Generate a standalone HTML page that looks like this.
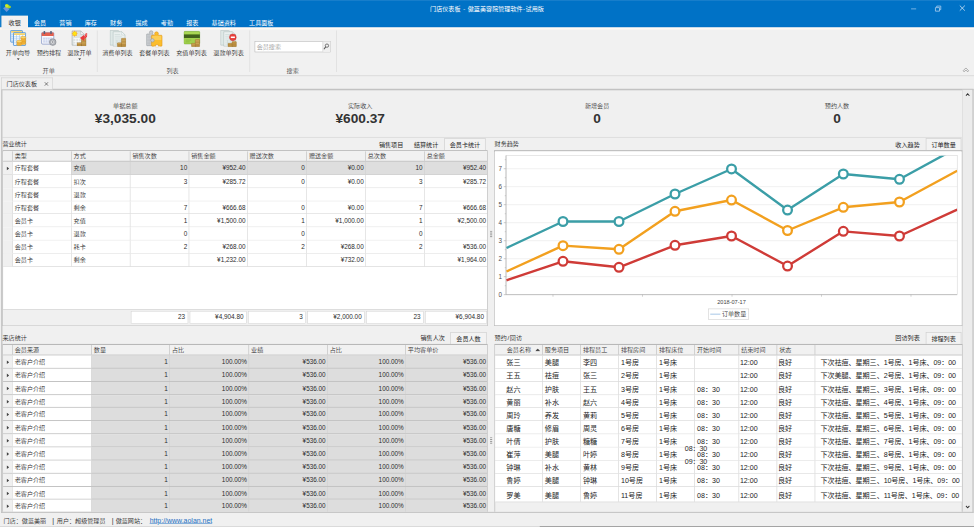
<!DOCTYPE html><html lang="zh"><head><meta charset="utf-8"><title>门店仪表板</title><style>
*{box-sizing:border-box;margin:0;padding:0}
html,body{width:974px;height:527px;overflow:hidden;background:#f0f0f0}
body{font-family:"Liberation Sans","Noto Sans CJK SC",sans-serif;font-size:12px;color:#2b2b2b;font-weight:350}
#app{position:absolute;left:0;top:0;width:1920px;height:1039px;transform:scale(0.507292);transform-origin:0 0;background:#f0f0f0;overflow:hidden}
.abs{position:absolute}
.t{position:absolute;white-space:nowrap;line-height:14px}
#blue{left:0;top:0;width:1920px;height:54px;background:#0072c6;border-bottom:1.500px solid #0066ba}
.rt{position:absolute;top:32px;height:22px;line-height:26px;overflow:hidden;color:#fff;padding:0 13px;white-space:nowrap;font-weight:400}
.rt.on{background:#f1f1f1;color:#2e2e2e;height:26px;box-shadow:0 0 0 1.200px #fcf4ea}
.sep{position:absolute;top:60px;width:1px;height:82px;background:#d4d4d4}
.lb{position:absolute;text-align:center;top:98px;line-height:14px;white-space:nowrap}
.gl{position:absolute;top:132px;line-height:14px;text-align:center;width:60px;margin-left:-30px;color:#444}
.grid{position:absolute;background:#fff;border:1.500px solid #a6a6a6;border-top:2px solid #b6b6b6;overflow:hidden}
.hd{position:absolute;left:0;top:0;height:21px;background:#f1f1f1;border-bottom:2px solid #c0c0c0}
.hc{position:absolute;top:0;height:19px;line-height:19px;padding-left:4px;border-left:1px solid #b2b2b2;color:#333;white-space:nowrap}
.row{position:absolute;left:0;height:26px;border-bottom:1px solid #c9c9c9}
.c{position:absolute;top:0;bottom:0;line-height:26px;padding:0 3px 0 4px;border-left:1px solid #cdcdcd;white-space:nowrap;overflow:hidden}
.r{text-align:right;font-size:12.600px}
.ind{position:absolute;left:0;top:0;bottom:0;width:19px;background:#f0f0f0}
.tab{position:absolute;height:23px;line-height:25px;text-align:center;white-space:nowrap;color:#262626;font-weight:400}
.tab.on{background:#f3f3f3;border:1px solid #c4c4c4;border-bottom:none}
.fbox{position:absolute;top:2.500px;height:25px;line-height:22px;font-size:12.600px;background:#fff;border:1px solid #cfcfcf;text-align:right;padding-right:5px}
.g4 .c{font-family:"Liberation Sans","Noto Sans CJK SC",sans-serif;font-size:14px;padding-left:4px;font-weight:400;color:#1c1c1c;border-left:1px solid #c9c9c9}
.g4 .row{border-bottom:1px solid #c9c9c9}
</style></head><body><div id="app">
<div class="abs" id="blue"></div>
<svg class="abs" style="left:0;top:0" width="30" height="30" viewBox="0 0 30 30"><path d="M6 16.500l6.500-4.500 6 6-5.500 5.500z" fill="#7f9bdc" opacity="0.85"/><path d="M10 9.500c2-2.500 6-1.500 8 1.500 2.500 0 4 1.500 3.500 4-1.500 2-5 2-6.500 0.500-3 0.500-6-2.500-5-6z" fill="#a6d427"/><path d="M10.500 10c1.500-2 4.500-1.500 6 0.800 0.500 2-1 4-3 4-2.500-0.300-3.800-2.500-3-4.800z" fill="#cbe832"/></svg>
<div class="abs" style="left:0;top:0;width:1920px;height:2px;background:rgba(255,255,255,0.09)"></div><div class="abs" style="left:0;top:0;width:2px;height:54px;background:rgba(255,255,255,0.08)"></div>
<div class="t" style="left:0;width:1920px;text-align:center;top:9.800px;color:#fff;word-spacing:1.800px;font-weight:400">门店仪表板 - 傲蓝美容院管理软件<span style="padding:0 1px">-</span>试用版</div>
<svg class="abs" style="left:1780px;top:0" width="140" height="32" viewBox="0 0 140 32"><g stroke-width="1.6" fill="none"><path d="M16 17.500h10" stroke="#8fc0ea"/><g stroke="#a9cdee"><path d="M64 15h8v7h-8z"/><path d="M66.500 14.500v-2.500h8v7h-2.500"/></g><path d="M112 11l10 10M122 11l-10 10" stroke="#d3e5f6"/></g></svg>
<div class="abs" style="left:0;top:54px;width:1920px;height:96px;background:#f1f1f1;border-bottom:1px solid #c6c6c6"></div>
<div class="abs" style="left:0;top:54px;width:1920px;height:1px;background:#c9dcee"></div><div class="abs" style="left:0;top:55px;width:1920px;height:2.500px;background:#fefaf4"></div>
<div class="rt on" style="left:4px;width:50px">收银</div>
<div class="rt" style="left:54px;width:50px">会员</div>
<div class="rt" style="left:104px;width:50px">营销</div>
<div class="rt" style="left:154px;width:50px">库存</div>
<div class="rt" style="left:204px;width:50px">财务</div>
<div class="rt" style="left:254px;width:50px">提成</div>
<div class="rt" style="left:304px;width:50px">考勤</div>
<div class="rt" style="left:354px;width:50px">报表</div>
<div class="rt" style="left:404px;width:74px">基础资料</div>
<div class="rt" style="left:478px;width:74px">工具面板</div>
<svg class="abs" style="left:20px;top:59px" width="32" height="32" viewBox="0 0 32 32">
<rect x="1" y="1" width="23" height="23" rx="1" fill="#e4f0fb" stroke="#3f8ad6" stroke-width="1.6"/>
<rect x="2" y="2" width="21" height="3.500" fill="#f6d36c"/>
<g stroke="#a9cdee" stroke-width="1"><path d="M2 9h21M2 13h21M2 17h21M2 21h21M7 5v18M13 5v18M19 5v18"/></g>
<rect x="6.500" y="5.500" width="24" height="25" rx="1" fill="#f7fbfe" stroke="#3f8ad6" stroke-width="1.6"/>
<rect x="7.500" y="6.500" width="22" height="3.500" fill="#f6d36c"/>
<g stroke="#9cc6ec" stroke-width="1.1"><path d="M7.500 13.500h22M7.500 17.500h22M7.500 21.500h22M7.500 25.500h22M12.500 10v20M18.500 10v20M24.500 10v20"/></g>
<g fill="#f6b83c" stroke="#dc961c" stroke-width="0.8"><ellipse cx="26" cy="26.500" rx="5.300" ry="2.300"/><ellipse cx="26" cy="23.500" rx="5.300" ry="2.300"/><ellipse cx="26" cy="20.500" rx="5.300" ry="2.300"/><ellipse cx="26" cy="17.500" rx="5.300" ry="2.300"/><ellipse cx="26" cy="15" rx="5.300" ry="2.300" fill="#fbd56c"/><ellipse cx="18" cy="28.500" rx="5.300" ry="2.300"/><ellipse cx="18" cy="25.500" rx="5.300" ry="2.300"/><ellipse cx="18" cy="22.800" rx="5.300" ry="2.300" fill="#fbd56c"/></g>
</svg>
<div class="lb" style="left:5px;width:61px">开单向导</div>
<svg class="abs" style="left:32.5px;top:115px" width="6" height="3.500"><path d="M0 0h6L3 3.500z" fill="#222"/></svg>
<svg class="abs" style="left:80px;top:59px" width="32" height="32" viewBox="0 0 32 32">
<rect x="2" y="5" width="24" height="23" rx="2" fill="#fbfbfd" stroke="#7d8fc4" stroke-width="1.4"/>
<path d="M2 7a2 2 0 0 1 2-2h20a2 2 0 0 1 2 2v5H2z" fill="#e2604f"/>
<rect x="6" y="2" width="3" height="6" rx="1" fill="#55607a"/><rect x="19" y="2" width="3" height="6" rx="1" fill="#55607a"/>
<rect x="5" y="15" width="18" height="10" fill="#c9d3ee"/>
<g stroke="#fff" stroke-width="0.8"><path d="M5 18.500h18M5 21.500h18M9.500 15v10M14 15v10M18.500 15v10"/></g>
<circle cx="24" cy="24" r="6.500" fill="#b9bcc2" stroke="#7b7e85" stroke-width="1.2"/><circle cx="24" cy="24" r="3.800" fill="#e9eaec" stroke="#8a8d93" stroke-width="0.8"/><circle cx="24" cy="24" r="1.500" fill="#6d7077"/>
</svg>
<div class="lb" style="left:66px;width:61px">预约排程</div>
<svg class="abs" style="left:140px;top:59px" width="32" height="32" viewBox="0 0 32 32">
<path d="M2 2h17l7 7v21H2z" fill="#dde2e2" stroke="#a3abad" stroke-width="1.2"/>
<path d="M19 2v7h7z" fill="#f4f6f6" stroke="#a3abad" stroke-width="0.8"/>
<g stroke="#fbfcfc" stroke-width="1.6"><path d="M5 17h16M5 22.500h16M5 28h12M9.500 17v11M15 17v11"/></g>
<g fill="#c69a46" stroke="#8f6627" stroke-width="0.7"><rect x="12" y="25.500" width="9.500" height="6"/><rect x="20.500" y="17" width="9" height="14.500"/></g>
<g stroke="#8f6627" stroke-width="0.6"><path d="M20.500 20h9M20.500 23h9M20.500 26h9M20.500 29h9M12 28.500h9.500"/></g>
<g stroke="#e9c47a" stroke-width="0.6"><path d="M21 18.500h8M21 21.500h8M21 24.500h8M21 27.500h8M12.500 27h8.500"/></g>
<polygon points="13.5,7.4 10.8,8.9 11.7,11.9 8.7,11.0 7.2,13.7 5.7,11.0 2.7,11.9 3.6,8.9 0.9,7.4 3.6,5.9 2.7,2.9 5.7,3.8 7.2,1.1 8.7,3.8 11.7,2.9 10.8,5.9" fill="#f8ab1c"/><circle cx="7.200" cy="7.400" r="3.600" fill="#ffe411"/>
<path d="M30 7c1.500 4.500-1.500 8.500-7 8.500" fill="none" stroke="#e8393b" stroke-width="4.500"/><path d="M17.500 16l8.500-6.500v12.500z" fill="#e8393b"/><path d="M30.500 8c0.800 3-1 5.500-4 6.500" fill="none" stroke="#f58a8a" stroke-width="1.200"/>
</svg>
<div class="lb" style="left:126px;width:61px">退款开单</div>
<svg class="abs" style="left:153.5px;top:115px" width="6" height="3.500"><path d="M0 0h6L3 3.500z" fill="#222"/></svg>
<div class="sep" style="left:191px"></div>
<svg class="abs" style="left:216px;top:59px" width="33" height="34" viewBox="0 0 33 34">
<path d="M1 1h16l6 6v23H1z" fill="#dfe9e7" stroke="#afc0bd" stroke-width="1.1"/>
<path d="M7 3.500h17l6.500 6.500v22H7z" fill="#eaf1f0" stroke="#afc0bd" stroke-width="1.1"/>
<path d="M24 3.500v6.500h6.500z" fill="#f7faf9" stroke="#afc0bd" stroke-width="0.8"/>
<g stroke="#c3d2cf" stroke-width="1"><path d="M10 9h11M10 12.500h14M10 16h14M10 20h17M10 24h17M10 28h8M14.500 20v8M21 20v5"/></g>
<g fill="#c69a46" stroke="#8f6627" stroke-width="0.7"><rect x="15.500" y="25.500" width="9" height="7.500" rx="1"/><rect x="23.500" y="16.500" width="8.500" height="16.500" rx="1"/></g>
<g stroke="#8f6627" stroke-width="0.6"><path d="M23.500 19.500h8.500M23.500 22.500h8.500M23.500 25.500h8.500M23.500 28.500h8.500M15.500 28.500h8M15.500 31h8M23.500 31h8.500"/></g>
<g stroke="#e6c88a" stroke-width="0.7"><path d="M24 18h7.500M24 21h7.500M24 24h7.500M24 27h7.500M16 27h7"/></g>
</svg>
<div class="lb" style="left:195px;width:73px">消费单列表</div>
<svg class="abs" style="left:288px;top:59px" width="33" height="34" viewBox="0 0 33 34">
<g fill="#c9ccd0" stroke="#8e9499" stroke-width="1"><circle cx="10" cy="5" r="3.400"/><rect x="1" y="8" width="13" height="23" rx="1"/></g><rect x="7.300" y="6.500" width="5.400" height="3" fill="#c9ccd0"/>
<g stroke="#aeb3b8" stroke-width="0.8"><path d="M2 14h11M2 20h8M2 26h11M6 9v21"/></g>
<g fill="#fbbd2d" stroke="#de921a" stroke-width="1"><circle cx="20.500" cy="7.500" r="3.800"/><rect x="10.500" y="10.500" width="21" height="21.500" rx="1.500"/></g><rect x="17.500" y="9" width="6" height="3.500" fill="#fbbd2d"/>
<path d="M12 12h18v8h-18z" fill="#fdd667" opacity="0.7"/>
<circle cx="21.500" cy="32" r="3.300" fill="#f1f1f1" stroke="#de921a" stroke-width="1"/><rect x="16" y="32.600" width="11" height="2" fill="#f1f1f1"/>
<circle cx="12.500" cy="20.500" r="3.400" fill="#c9ccd0" stroke="#8e9499" stroke-width="1"/>
</svg>
<div class="lb" style="left:268px;width:73px">套餐单列表</div>
<svg class="abs" style="left:362px;top:59px" width="33" height="34" viewBox="0 0 33 34">
<rect x="0.500" y="3" width="31.500" height="24.500" rx="2" fill="#94c93d" stroke="#5f9a22" stroke-width="1"/>
<rect x="1" y="3.500" width="30.500" height="4.500" rx="1.500" fill="#a9d655"/>
<rect x="0.500" y="9" width="31.500" height="7" fill="#42601d"/>
<rect x="1" y="16" width="30.500" height="11" fill="#a2d04f"/>
<g stroke="#7fb435" stroke-width="1.2"><path d="M4 20h11M4 23.500h8"/></g>
<g fill="#c69a46" stroke="#8f6627" stroke-width="0.7"><rect x="15.500" y="26.500" width="8.500" height="6.500" rx="1"/><rect x="23" y="19" width="8.500" height="14" rx="1"/></g>
<g stroke="#8f6627" stroke-width="0.6"><path d="M23 22h8.500M23 25h8.500M23 28h8.500M23 31h8.500M15.500 29.500h7.500"/></g>
<g stroke="#e6c88a" stroke-width="0.7"><path d="M23.500 20.500h7.500M23.500 23.500h7.500M23.500 26.500h7.500M16 28h7"/></g>
</svg>
<div class="lb" style="left:341px;width:73px">充值单列表</div>
<svg class="abs" style="left:434px;top:59px" width="33" height="34" viewBox="0 0 33 34">
<path d="M1 1h16l6 6v23H1z" fill="#dfe9e7" stroke="#afc0bd" stroke-width="1.1"/>
<path d="M7 3.500h17l6.500 6.500v22H7z" fill="#eaf1f0" stroke="#afc0bd" stroke-width="1.1"/>
<path d="M24 3.500v6.500h6.500z" fill="#f7faf9" stroke="#afc0bd" stroke-width="0.8"/>
<g stroke="#c3d2cf" stroke-width="1"><path d="M10 9h11M10 12.500h14M10 16h14M10 20h17M10 24h17M10 28h8M14.500 20v8M21 20v5"/></g>
<g fill="#c69a46" stroke="#8f6627" stroke-width="0.7"><rect x="15.500" y="26.500" width="9" height="6.500" rx="1"/><rect x="23.500" y="23" width="8.500" height="10" rx="1"/></g>
<g stroke="#8f6627" stroke-width="0.6"><path d="M23.500 26h8.500M23.500 29h8.500M15.500 29.500h8M23.500 31.500h8.500"/></g>
<circle cx="25" cy="14.500" r="6.700" fill="#ea403c" stroke="#b92b29" stroke-width="0.8"/><rect x="21" y="13" width="8" height="3" fill="#fff"/>
</svg>
<div class="lb" style="left:414px;width:73px">退款单列表</div>
<div class="sep" style="left:492px"></div>
<div class="abs" style="left:502px;top:81px;width:150px;height:22px;background:#fff;border:1px solid #ababab"></div>
<div class="t" style="left:506px;top:85px;color:#999">会员搜索</div>
<div class="abs" style="left:636px;top:82px;width:15px;height:20px;background:#f0f0f0;border-left:1px solid #c8c8c8"></div>
<svg class="abs" style="left:637px;top:85px" width="13" height="14" viewBox="0 0 13 14"><circle cx="7.500" cy="5" r="3.300" fill="none" stroke="#555" stroke-width="1.5"/><path d="M5 7.500L1.500 12" stroke="#555" stroke-width="2"/></svg>
<div class="sep" style="left:663px"></div>
<div class="gl" style="left:96px">开单</div><div class="gl" style="left:340px">列表</div><div class="gl" style="left:577px">搜索</div>
<svg class="abs" style="left:1897px;top:132px" width="14" height="12" viewBox="0 0 14 12"><path d="M1.500 7.500L7 2l5.500 5.500L10.500 9.500 7 6 3.500 9.500z" fill="none" stroke="#777" stroke-width="1.1"/></svg>
<div class="abs" style="left:2px;top:174.500px;width:1917px;height:837px;border:2.500px solid #c6c6c6;border-left:3px solid #c8c8c8;border-top:3px solid #c2c2c2;border-bottom:none;background:#f0f0f0"></div>
<div class="abs" style="left:2px;top:153px;width:102px;height:23px;border:1px solid #c9c9c9;border-bottom:none;background:#f0f0f0"></div>
<div class="t" style="left:13px;top:158px;color:#222">门店仪表板</div>
<svg class="abs" style="left:87px;top:161px" width="9" height="9"><path d="M1 1l7 7M8 1l-7 7" stroke="#444" stroke-width="1.3"/></svg>
<div class="t" style="left:97px;width:300px;text-align:center;top:201px;color:#3a3a3a">单据总额</div>
<div class="t" style="left:97px;width:300px;text-align:center;top:217px;line-height:32px;font-size:27px;font-weight:bold;color:#333">¥3,035.00</div>
<div class="t" style="left:560px;width:300px;text-align:center;top:201px;color:#3a3a3a">实际收入</div>
<div class="t" style="left:560px;width:300px;text-align:center;top:217px;line-height:32px;font-size:27px;font-weight:bold;color:#333">¥600.37</div>
<div class="t" style="left:1027px;width:300px;text-align:center;top:201px;color:#3a3a3a">新增会员</div>
<div class="t" style="left:1027px;width:300px;text-align:center;top:217px;line-height:32px;font-size:27px;font-weight:bold;color:#333">0</div>
<div class="t" style="left:1500px;width:300px;text-align:center;top:201px;color:#3a3a3a">预约人数</div>
<div class="t" style="left:1500px;width:300px;text-align:center;top:217px;line-height:32px;font-size:27px;font-weight:bold;color:#333">0</div>
<div class="abs" style="left:4px;top:270px;width:1892px;height:1px;background:#cdcdcd"></div>
<div class="abs" style="left:1897px;top:177px;width:20px;height:834px;background:#ececec;border-left:1px solid #d4d4d4"></div>
<svg class="abs" style="left:1903px;top:183px" width="9" height="7"><path d="M1 5.800L4.500 2 8 5.800" fill="none" stroke="#333" stroke-width="2"/></svg>
<svg class="abs" style="left:1903px;top:996px" width="9" height="7"><path d="M1 1.200L4.500 5 8 1.200" fill="none" stroke="#333" stroke-width="2"/></svg>
<div class="abs" style="left:1917px;top:176px;width:2px;height:836px;background:#c6c6c6"></div>
<div class="t" style="left:5px;top:276.500px">营业统计</div>
<div class="tab" style="left:736.5px;top:273px;width:69px">销售项目</div>
<div class="tab" style="left:805.5px;top:273px;width:69px">结算统计</div>
<div class="tab on" style="left:876.0px;top:273px;width:81px">会员卡统计</div>
<div class="grid" style="left:5px;top:296px;width:956px;height:346px">
<div class="hd" style="width:956px"></div>
<div class="hc" style="left:18px;width:116px">类型</div>
<div class="hc" style="left:134px;width:116px">方式</div>
<div class="hc" style="left:250px;width:116px">销售次数</div>
<div class="hc" style="left:366px;width:115px">销售金额</div>
<div class="hc" style="left:481px;width:117px">赠送次数</div>
<div class="hc" style="left:598px;width:116px">赠送金额</div>
<div class="hc" style="left:714px;width:116px">总次数</div>
<div class="hc" style="left:830px;width:125px">总金额</div>
<div class="row" style="top:21px;height:26px;width:956px;background:#dedede">
<div class="ind"></div>
<svg class="abs" style="left:7px;top:9px" width="5" height="8"><path d="M0 0l5 4-5 4z" fill="#444"/></svg>
<div class="c" style="left:18px;width:116px;background:#fff">疗程套餐</div>
<div class="c" style="left:134px;width:116px">充值</div>
<div class="c r" style="left:250px;width:116px">10</div>
<div class="c r" style="left:366px;width:115px">¥952.40</div>
<div class="c r" style="left:481px;width:117px">0</div>
<div class="c r" style="left:598px;width:116px">¥0.00</div>
<div class="c r" style="left:714px;width:116px">10</div>
<div class="c r" style="left:830px;width:125px">¥952.40</div>
</div>
<div class="row" style="top:47px;height:26px;width:956px;background:#fff">
<div class="ind"></div>
<div class="c" style="left:18px;width:116px">疗程套餐</div>
<div class="c" style="left:134px;width:116px">扣次</div>
<div class="c r" style="left:250px;width:116px">3</div>
<div class="c r" style="left:366px;width:115px">¥285.72</div>
<div class="c r" style="left:481px;width:117px">0</div>
<div class="c r" style="left:598px;width:116px">¥0.00</div>
<div class="c r" style="left:714px;width:116px">3</div>
<div class="c r" style="left:830px;width:125px">¥285.72</div>
</div>
<div class="row" style="top:73px;height:26px;width:956px;background:#fff">
<div class="ind"></div>
<div class="c" style="left:18px;width:116px">疗程套餐</div>
<div class="c" style="left:134px;width:116px">退款</div>
<div class="c r" style="left:250px;width:116px"></div>
<div class="c r" style="left:366px;width:115px"></div>
<div class="c r" style="left:481px;width:117px"></div>
<div class="c r" style="left:598px;width:116px"></div>
<div class="c r" style="left:714px;width:116px"></div>
<div class="c r" style="left:830px;width:125px"></div>
</div>
<div class="row" style="top:99px;height:25px;width:956px;background:#fff">
<div class="ind"></div>
<div class="c" style="left:18px;width:116px">疗程套餐</div>
<div class="c" style="left:134px;width:116px">剩余</div>
<div class="c r" style="left:250px;width:116px">7</div>
<div class="c r" style="left:366px;width:115px">¥666.68</div>
<div class="c r" style="left:481px;width:117px">0</div>
<div class="c r" style="left:598px;width:116px">¥0.00</div>
<div class="c r" style="left:714px;width:116px">7</div>
<div class="c r" style="left:830px;width:125px">¥666.68</div>
</div>
<div class="row" style="top:124px;height:26px;width:956px;background:#fff">
<div class="ind"></div>
<div class="c" style="left:18px;width:116px">会员卡</div>
<div class="c" style="left:134px;width:116px">充值</div>
<div class="c r" style="left:250px;width:116px">1</div>
<div class="c r" style="left:366px;width:115px">¥1,500.00</div>
<div class="c r" style="left:481px;width:117px">1</div>
<div class="c r" style="left:598px;width:116px">¥1,000.00</div>
<div class="c r" style="left:714px;width:116px">1</div>
<div class="c r" style="left:830px;width:125px">¥2,500.00</div>
</div>
<div class="row" style="top:150px;height:26px;width:956px;background:#fff">
<div class="ind"></div>
<div class="c" style="left:18px;width:116px">会员卡</div>
<div class="c" style="left:134px;width:116px">退款</div>
<div class="c r" style="left:250px;width:116px">0</div>
<div class="c r" style="left:366px;width:115px"></div>
<div class="c r" style="left:481px;width:117px">0</div>
<div class="c r" style="left:598px;width:116px"></div>
<div class="c r" style="left:714px;width:116px">0</div>
<div class="c r" style="left:830px;width:125px"></div>
</div>
<div class="row" style="top:176px;height:26px;width:956px;background:#fff">
<div class="ind"></div>
<div class="c" style="left:18px;width:116px">会员卡</div>
<div class="c" style="left:134px;width:116px">耗卡</div>
<div class="c r" style="left:250px;width:116px">2</div>
<div class="c r" style="left:366px;width:115px">¥268.00</div>
<div class="c r" style="left:481px;width:117px">2</div>
<div class="c r" style="left:598px;width:116px">¥268.00</div>
<div class="c r" style="left:714px;width:116px">2</div>
<div class="c r" style="left:830px;width:125px">¥536.00</div>
</div>
<div class="row" style="top:202px;height:26px;width:956px;background:#fff">
<div class="ind"></div>
<div class="c" style="left:18px;width:116px">会员卡</div>
<div class="c" style="left:134px;width:116px">剩余</div>
<div class="c r" style="left:250px;width:116px"></div>
<div class="c r" style="left:366px;width:115px">¥1,232.00</div>
<div class="c r" style="left:481px;width:117px"></div>
<div class="c r" style="left:598px;width:116px">¥732.00</div>
<div class="c r" style="left:714px;width:116px"></div>
<div class="c r" style="left:830px;width:125px">¥1,964.00</div>
</div>
<div class="abs" style="left:0;top:311.500px;width:956px;height:34px;background:#f0f0f0;border-top:1px solid #c4c4c4">
<div class="fbox" style="left:252px;width:113px">23</div>
<div class="fbox" style="left:368px;width:112px">¥4,904.80</div>
<div class="fbox" style="left:483px;width:114px">3</div>
<div class="fbox" style="left:600px;width:113px">¥2,000.00</div>
<div class="fbox" style="left:716px;width:113px">23</div>
<div class="fbox" style="left:832px;width:122px">¥6,904.80</div>
</div>
</div>
<svg class="abs" style="left:966px;top:455px" width="5" height="14"><g fill="#858585"><rect x="0" y="0" width="4.500" height="1.600"/><rect x="0" y="3.600" width="4.500" height="1.600"/><rect x="0" y="7.200" width="4.500" height="1.600"/><rect x="0" y="10.800" width="4.500" height="1.600"/></g></svg>
<svg class="abs" style="left:966px;top:862px" width="5" height="14"><g fill="#858585"><rect x="0" y="0" width="4.500" height="1.600"/><rect x="0" y="3.600" width="4.500" height="1.600"/><rect x="0" y="7.200" width="4.500" height="1.600"/><rect x="0" y="10.800" width="4.500" height="1.600"/></g></svg>
<div class="t" style="left:975px;top:276.500px">财务趋势</div>
<div class="tab" style="left:1754.5px;top:273px;width:69px">收入趋势</div>
<div class="tab on" style="left:1825.0px;top:273px;width:70px">订单数量</div>
<div class="abs" style="left:974px;top:296px;width:923px;height:346px;background:#fff;border:1.500px solid #a6a6a6;border-top:2px solid #b6b6b6"></div>
<svg class="abs" style="left:0;top:0" width="1920" height="1039" viewBox="0 0 1920 1039"><defs><clipPath id="cp"><rect x="997.5" y="306.9" width="889.4" height="274.0"/></clipPath></defs><path d="M997.5 580.9h-4.500" stroke="#9a9a9a" stroke-width="1"/><text x="989.5" y="585.1" font-size="12.400" fill="#505050" text-anchor="end" font-family="Liberation Sans, sans-serif">0</text><path d="M997.5 563.2h-2.500" stroke="#a8a8a8" stroke-width="1"/><path d="M997.5 545.4H1886.9" stroke="#e4e4e4" stroke-width="1"/><path d="M997.5 545.4h-4.500" stroke="#9a9a9a" stroke-width="1"/><text x="989.5" y="549.6" font-size="12.400" fill="#505050" text-anchor="end" font-family="Liberation Sans, sans-serif">1</text><path d="M997.5 527.7h-2.500" stroke="#a8a8a8" stroke-width="1"/><path d="M997.5 510.0H1886.9" stroke="#e4e4e4" stroke-width="1"/><path d="M997.5 510.0h-4.500" stroke="#9a9a9a" stroke-width="1"/><text x="989.5" y="514.2" font-size="12.400" fill="#505050" text-anchor="end" font-family="Liberation Sans, sans-serif">2</text><path d="M997.5 492.2h-2.500" stroke="#a8a8a8" stroke-width="1"/><path d="M997.5 474.5H1886.9" stroke="#e4e4e4" stroke-width="1"/><path d="M997.5 474.5h-4.500" stroke="#9a9a9a" stroke-width="1"/><text x="989.5" y="478.7" font-size="12.400" fill="#505050" text-anchor="end" font-family="Liberation Sans, sans-serif">3</text><path d="M997.5 456.7h-2.500" stroke="#a8a8a8" stroke-width="1"/><path d="M997.5 439.0H1886.9" stroke="#e4e4e4" stroke-width="1"/><path d="M997.5 439.0h-4.500" stroke="#9a9a9a" stroke-width="1"/><text x="989.5" y="443.2" font-size="12.400" fill="#505050" text-anchor="end" font-family="Liberation Sans, sans-serif">4</text><path d="M997.5 421.3h-2.500" stroke="#a8a8a8" stroke-width="1"/><path d="M997.5 403.5H1886.9" stroke="#e4e4e4" stroke-width="1"/><path d="M997.5 403.5h-4.500" stroke="#9a9a9a" stroke-width="1"/><text x="989.5" y="407.7" font-size="12.400" fill="#505050" text-anchor="end" font-family="Liberation Sans, sans-serif">5</text><path d="M997.5 385.8h-2.500" stroke="#a8a8a8" stroke-width="1"/><path d="M997.5 368.0H1886.9" stroke="#e4e4e4" stroke-width="1"/><path d="M997.5 368.0h-4.500" stroke="#9a9a9a" stroke-width="1"/><text x="989.5" y="372.2" font-size="12.400" fill="#505050" text-anchor="end" font-family="Liberation Sans, sans-serif">6</text><path d="M997.5 350.3h-2.500" stroke="#a8a8a8" stroke-width="1"/><path d="M997.5 332.6H1886.9" stroke="#e4e4e4" stroke-width="1"/><path d="M997.5 332.6h-4.500" stroke="#9a9a9a" stroke-width="1"/><text x="989.5" y="336.8" font-size="12.400" fill="#505050" text-anchor="end" font-family="Liberation Sans, sans-serif">7</text><path d="M997.5 314.8h-2.500" stroke="#a8a8a8" stroke-width="1"/><rect x="997.5" y="306.9" width="889.4" height="274.0" fill="none" stroke="#d0d0d0" stroke-width="1"/><path d="M997.5 306.9V580.9H1886.9" fill="none" stroke="#9a9a9a" stroke-width="1"/><path d="M1090.1 580.9v4" stroke="#a5a5a5" stroke-width="1"/><path d="M1266.5 580.9v4" stroke="#a5a5a5" stroke-width="1"/><path d="M1443.0 580.9v4" stroke="#a5a5a5" stroke-width="1"/><path d="M1619.4 580.9v4" stroke="#a5a5a5" stroke-width="1"/><path d="M1795.8 580.9v4" stroke="#a5a5a5" stroke-width="1"/><text x="1442.0" y="600.2" font-size="11" fill="#444" text-anchor="middle" font-family="Liberation Sans, sans-serif">2018-07-17</text><g clip-path="url(#cp)"><path d="M998.4 488.9 L1109.8 436.6 L1220.2 436.6 L1330.6 382.4 L1442.0 333.1 L1552.4 414.0 L1662.4 343.0 L1773.1 353.4 L1886.9 291.2" fill="none" stroke="#3b9ea7" stroke-width="4.700" stroke-linejoin="round"/><path d="M998.4 535.2 L1109.8 484.3 L1220.2 491.4 L1330.6 416.5 L1442.0 394.3 L1552.4 454.4 L1662.4 408.6 L1773.1 398.2 L1886.9 336.5" fill="none" stroke="#f2a01f" stroke-width="4.700" stroke-linejoin="round"/><path d="M998.4 552.5 L1109.8 515.1 L1220.2 526.9 L1330.6 483.5 L1442.0 465.2 L1552.4 524.4 L1662.4 456.0 L1773.1 465.2 L1886.9 413.2" fill="none" stroke="#cf3b37" stroke-width="4.700" stroke-linejoin="round"/><circle cx="1109.8" cy="436.6" r="8.600" fill="#fff" stroke="#3b9ea7" stroke-width="4.500"/><circle cx="1220.2" cy="436.6" r="8.600" fill="#fff" stroke="#3b9ea7" stroke-width="4.500"/><circle cx="1330.6" cy="382.4" r="8.600" fill="#fff" stroke="#3b9ea7" stroke-width="4.500"/><circle cx="1442.0" cy="333.1" r="8.600" fill="#fff" stroke="#3b9ea7" stroke-width="4.500"/><circle cx="1552.4" cy="414.0" r="8.600" fill="#fff" stroke="#3b9ea7" stroke-width="4.500"/><circle cx="1662.4" cy="343.0" r="8.600" fill="#fff" stroke="#3b9ea7" stroke-width="4.500"/><circle cx="1773.1" cy="353.4" r="8.600" fill="#fff" stroke="#3b9ea7" stroke-width="4.500"/><circle cx="1109.8" cy="484.3" r="8.600" fill="#fff" stroke="#f2a01f" stroke-width="4.500"/><circle cx="1220.2" cy="491.4" r="8.600" fill="#fff" stroke="#f2a01f" stroke-width="4.500"/><circle cx="1330.6" cy="416.5" r="8.600" fill="#fff" stroke="#f2a01f" stroke-width="4.500"/><circle cx="1442.0" cy="394.3" r="8.600" fill="#fff" stroke="#f2a01f" stroke-width="4.500"/><circle cx="1552.4" cy="454.4" r="8.600" fill="#fff" stroke="#f2a01f" stroke-width="4.500"/><circle cx="1662.4" cy="408.6" r="8.600" fill="#fff" stroke="#f2a01f" stroke-width="4.500"/><circle cx="1773.1" cy="398.2" r="8.600" fill="#fff" stroke="#f2a01f" stroke-width="4.500"/><circle cx="1109.8" cy="515.1" r="8.600" fill="#fff" stroke="#cf3b37" stroke-width="4.500"/><circle cx="1220.2" cy="526.9" r="8.600" fill="#fff" stroke="#cf3b37" stroke-width="4.500"/><circle cx="1330.6" cy="483.5" r="8.600" fill="#fff" stroke="#cf3b37" stroke-width="4.500"/><circle cx="1442.0" cy="465.2" r="8.600" fill="#fff" stroke="#cf3b37" stroke-width="4.500"/><circle cx="1552.4" cy="524.4" r="8.600" fill="#fff" stroke="#cf3b37" stroke-width="4.500"/><circle cx="1662.4" cy="456.0" r="8.600" fill="#fff" stroke="#cf3b37" stroke-width="4.500"/><circle cx="1773.1" cy="465.2" r="8.600" fill="#fff" stroke="#cf3b37" stroke-width="4.500"/></g><rect x="1396.6" y="608.9" width="79.4" height="20.7" fill="#fff" stroke="#c8c8c8" stroke-width="1"/><path d="M1400.1 619.3h20" stroke="#9fc3e6" stroke-width="1.800"/><text x="1423.1" y="623.8" font-size="12" fill="#333" font-family="Liberation Sans, Noto Sans CJK SC, sans-serif">订单数量</text></svg>
<div class="t" style="left:5px;top:659.500px">来店统计</div>
<div class="tab" style="left:818.5px;top:655px;width:69px">销售人次</div>
<div class="tab on" style="left:888.0px;top:655px;width:71px">会员人数</div>
<div class="grid" style="left:5px;top:678px;width:956px;height:331px;border-bottom:none">
<div class="hd" style="width:956px"></div>
<div class="hc" style="left:18px;width:156px">会员来源</div>
<div class="hc" style="left:174px;width:154px">数量</div>
<div class="hc" style="left:328px;width:156px">占比</div>
<div class="hc" style="left:484px;width:155px">业绩</div>
<div class="hc" style="left:639px;width:154px">占比</div>
<div class="hc" style="left:793px;width:162px">平均客单价</div>
<div class="row" style="top:21px;height:26px;width:956px;background:#dddddd;border-bottom:2px solid #c3c3c3">
<div class="ind"></div>
<svg class="abs" style="left:7px;top:9px" width="5" height="8"><path d="M0 0l5 4-5 4z" fill="#444"/></svg>
<div class="c" style="left:18px;width:156px;border-left-color:#cfcfcf;background:#fff">老客户介绍</div>
<div class="c r" style="left:174px;width:154px;border-left-color:#cfcfcf">1</div>
<div class="c r" style="left:328px;width:156px;border-left-color:#cfcfcf">100.00%</div>
<div class="c r" style="left:484px;width:155px;border-left-color:#cfcfcf">¥536.00</div>
<div class="c r" style="left:639px;width:154px;border-left-color:#cfcfcf">100.00%</div>
<div class="c r" style="left:793px;width:162px;border-left-color:#cfcfcf">¥536.00</div>
</div>
<div class="row" style="top:47px;height:26px;width:956px;background:#dddddd;border-bottom:2px solid #c3c3c3">
<div class="ind"></div>
<svg class="abs" style="left:7px;top:9px" width="5" height="8"><path d="M0 0l5 4-5 4z" fill="#444"/></svg>
<div class="c" style="left:18px;width:156px;border-left-color:#cfcfcf;background:#fff">老客户介绍</div>
<div class="c r" style="left:174px;width:154px;border-left-color:#cfcfcf">1</div>
<div class="c r" style="left:328px;width:156px;border-left-color:#cfcfcf">100.00%</div>
<div class="c r" style="left:484px;width:155px;border-left-color:#cfcfcf">¥536.00</div>
<div class="c r" style="left:639px;width:154px;border-left-color:#cfcfcf">100.00%</div>
<div class="c r" style="left:793px;width:162px;border-left-color:#cfcfcf">¥536.00</div>
</div>
<div class="row" style="top:73px;height:26px;width:956px;background:#dddddd;border-bottom:2px solid #c3c3c3">
<div class="ind"></div>
<svg class="abs" style="left:7px;top:9px" width="5" height="8"><path d="M0 0l5 4-5 4z" fill="#444"/></svg>
<div class="c" style="left:18px;width:156px;border-left-color:#cfcfcf;background:#fff">老客户介绍</div>
<div class="c r" style="left:174px;width:154px;border-left-color:#cfcfcf">1</div>
<div class="c r" style="left:328px;width:156px;border-left-color:#cfcfcf">100.00%</div>
<div class="c r" style="left:484px;width:155px;border-left-color:#cfcfcf">¥536.00</div>
<div class="c r" style="left:639px;width:154px;border-left-color:#cfcfcf">100.00%</div>
<div class="c r" style="left:793px;width:162px;border-left-color:#cfcfcf">¥536.00</div>
</div>
<div class="row" style="top:99px;height:25px;width:956px;background:#dddddd;border-bottom:2px solid #c3c3c3">
<div class="ind"></div>
<svg class="abs" style="left:7px;top:9px" width="5" height="8"><path d="M0 0l5 4-5 4z" fill="#444"/></svg>
<div class="c" style="left:18px;width:156px;border-left-color:#cfcfcf;background:#fff">老客户介绍</div>
<div class="c r" style="left:174px;width:154px;border-left-color:#cfcfcf">1</div>
<div class="c r" style="left:328px;width:156px;border-left-color:#cfcfcf">100.00%</div>
<div class="c r" style="left:484px;width:155px;border-left-color:#cfcfcf">¥536.00</div>
<div class="c r" style="left:639px;width:154px;border-left-color:#cfcfcf">100.00%</div>
<div class="c r" style="left:793px;width:162px;border-left-color:#cfcfcf">¥536.00</div>
</div>
<div class="row" style="top:124px;height:26px;width:956px;background:#dddddd;border-bottom:2px solid #c3c3c3">
<div class="ind"></div>
<svg class="abs" style="left:7px;top:9px" width="5" height="8"><path d="M0 0l5 4-5 4z" fill="#444"/></svg>
<div class="c" style="left:18px;width:156px;border-left-color:#cfcfcf;background:#fff">老客户介绍</div>
<div class="c r" style="left:174px;width:154px;border-left-color:#cfcfcf">1</div>
<div class="c r" style="left:328px;width:156px;border-left-color:#cfcfcf">100.00%</div>
<div class="c r" style="left:484px;width:155px;border-left-color:#cfcfcf">¥536.00</div>
<div class="c r" style="left:639px;width:154px;border-left-color:#cfcfcf">100.00%</div>
<div class="c r" style="left:793px;width:162px;border-left-color:#cfcfcf">¥536.00</div>
</div>
<div class="row" style="top:150px;height:26px;width:956px;background:#dddddd;border-bottom:2px solid #c3c3c3">
<div class="ind"></div>
<svg class="abs" style="left:7px;top:9px" width="5" height="8"><path d="M0 0l5 4-5 4z" fill="#444"/></svg>
<div class="c" style="left:18px;width:156px;border-left-color:#cfcfcf;background:#fff">老客户介绍</div>
<div class="c r" style="left:174px;width:154px;border-left-color:#cfcfcf">1</div>
<div class="c r" style="left:328px;width:156px;border-left-color:#cfcfcf">100.00%</div>
<div class="c r" style="left:484px;width:155px;border-left-color:#cfcfcf">¥536.00</div>
<div class="c r" style="left:639px;width:154px;border-left-color:#cfcfcf">100.00%</div>
<div class="c r" style="left:793px;width:162px;border-left-color:#cfcfcf">¥536.00</div>
</div>
<div class="row" style="top:176px;height:26px;width:956px;background:#dddddd;border-bottom:2px solid #c3c3c3">
<div class="ind"></div>
<svg class="abs" style="left:7px;top:9px" width="5" height="8"><path d="M0 0l5 4-5 4z" fill="#444"/></svg>
<div class="c" style="left:18px;width:156px;border-left-color:#cfcfcf;background:#fff">老客户介绍</div>
<div class="c r" style="left:174px;width:154px;border-left-color:#cfcfcf">1</div>
<div class="c r" style="left:328px;width:156px;border-left-color:#cfcfcf">100.00%</div>
<div class="c r" style="left:484px;width:155px;border-left-color:#cfcfcf">¥536.00</div>
<div class="c r" style="left:639px;width:154px;border-left-color:#cfcfcf">100.00%</div>
<div class="c r" style="left:793px;width:162px;border-left-color:#cfcfcf">¥536.00</div>
</div>
<div class="row" style="top:202px;height:26px;width:956px;background:#dddddd;border-bottom:2px solid #c3c3c3">
<div class="ind"></div>
<svg class="abs" style="left:7px;top:9px" width="5" height="8"><path d="M0 0l5 4-5 4z" fill="#444"/></svg>
<div class="c" style="left:18px;width:156px;border-left-color:#cfcfcf;background:#fff">老客户介绍</div>
<div class="c r" style="left:174px;width:154px;border-left-color:#cfcfcf">1</div>
<div class="c r" style="left:328px;width:156px;border-left-color:#cfcfcf">100.00%</div>
<div class="c r" style="left:484px;width:155px;border-left-color:#cfcfcf">¥536.00</div>
<div class="c r" style="left:639px;width:154px;border-left-color:#cfcfcf">100.00%</div>
<div class="c r" style="left:793px;width:162px;border-left-color:#cfcfcf">¥536.00</div>
</div>
<div class="row" style="top:228px;height:26px;width:956px;background:#dddddd;border-bottom:2px solid #c3c3c3">
<div class="ind"></div>
<svg class="abs" style="left:7px;top:9px" width="5" height="8"><path d="M0 0l5 4-5 4z" fill="#444"/></svg>
<div class="c" style="left:18px;width:156px;border-left-color:#cfcfcf;background:#fff">老客户介绍</div>
<div class="c r" style="left:174px;width:154px;border-left-color:#cfcfcf">1</div>
<div class="c r" style="left:328px;width:156px;border-left-color:#cfcfcf">100.00%</div>
<div class="c r" style="left:484px;width:155px;border-left-color:#cfcfcf">¥536.00</div>
<div class="c r" style="left:639px;width:154px;border-left-color:#cfcfcf">100.00%</div>
<div class="c r" style="left:793px;width:162px;border-left-color:#cfcfcf">¥536.00</div>
</div>
<div class="row" style="top:254px;height:26px;width:956px;background:#dddddd;border-bottom:2px solid #c3c3c3">
<div class="ind"></div>
<svg class="abs" style="left:7px;top:9px" width="5" height="8"><path d="M0 0l5 4-5 4z" fill="#444"/></svg>
<div class="c" style="left:18px;width:156px;border-left-color:#cfcfcf;background:#fff">老客户介绍</div>
<div class="c r" style="left:174px;width:154px;border-left-color:#cfcfcf">1</div>
<div class="c r" style="left:328px;width:156px;border-left-color:#cfcfcf">100.00%</div>
<div class="c r" style="left:484px;width:155px;border-left-color:#cfcfcf">¥536.00</div>
<div class="c r" style="left:639px;width:154px;border-left-color:#cfcfcf">100.00%</div>
<div class="c r" style="left:793px;width:162px;border-left-color:#cfcfcf">¥536.00</div>
</div>
<div class="row" style="top:280px;height:25px;width:956px;background:#dddddd;border-bottom:2px solid #c3c3c3">
<div class="ind"></div>
<svg class="abs" style="left:7px;top:9px" width="5" height="8"><path d="M0 0l5 4-5 4z" fill="#444"/></svg>
<div class="c" style="left:18px;width:156px;border-left-color:#cfcfcf;background:#fff">老客户介绍</div>
<div class="c r" style="left:174px;width:154px;border-left-color:#cfcfcf">1</div>
<div class="c r" style="left:328px;width:156px;border-left-color:#cfcfcf">100.00%</div>
<div class="c r" style="left:484px;width:155px;border-left-color:#cfcfcf">¥536.00</div>
<div class="c r" style="left:639px;width:154px;border-left-color:#cfcfcf">100.00%</div>
<div class="c r" style="left:793px;width:162px;border-left-color:#cfcfcf">¥536.00</div>
</div>
<div class="row" style="top:305px;height:26px;width:956px;background:#dddddd;border-bottom:2px solid #c3c3c3">
<div class="ind"></div>
<svg class="abs" style="left:7px;top:9px" width="5" height="8"><path d="M0 0l5 4-5 4z" fill="#444"/></svg>
<div class="c" style="left:18px;width:156px;border-left-color:#cfcfcf;background:#fff">老客户介绍</div>
<div class="c r" style="left:174px;width:154px;border-left-color:#cfcfcf">1</div>
<div class="c r" style="left:328px;width:156px;border-left-color:#cfcfcf">100.00%</div>
<div class="c r" style="left:484px;width:155px;border-left-color:#cfcfcf">¥536.00</div>
<div class="c r" style="left:639px;width:154px;border-left-color:#cfcfcf">100.00%</div>
<div class="c r" style="left:793px;width:162px;border-left-color:#cfcfcf">¥536.00</div>
</div>
<div class="row" style="top:331px;height:26px;width:956px;background:#dddddd;border-bottom:2px solid #c3c3c3">
<div class="ind"></div>
<svg class="abs" style="left:7px;top:9px" width="5" height="8"><path d="M0 0l5 4-5 4z" fill="#444"/></svg>
<div class="c" style="left:18px;width:156px;border-left-color:#cfcfcf;background:#fff">老客户介绍</div>
<div class="c r" style="left:174px;width:154px;border-left-color:#cfcfcf">1</div>
<div class="c r" style="left:328px;width:156px;border-left-color:#cfcfcf">100.00%</div>
<div class="c r" style="left:484px;width:155px;border-left-color:#cfcfcf">¥536.00</div>
<div class="c r" style="left:639px;width:154px;border-left-color:#cfcfcf">100.00%</div>
<div class="c r" style="left:793px;width:162px;border-left-color:#cfcfcf">¥536.00</div>
</div>
</div>
<div class="t" style="left:975px;top:659.500px">预约<span style="padding:0 1.300px">/</span>回访</div>
<div class="tab" style="left:1754.5px;top:655px;width:69px">回访列表</div>
<div class="tab on" style="left:1825.0px;top:655px;width:70px">排程列表</div>
<div class="grid g4" style="left:975px;top:678px;width:922px;height:331px;background:#f0f0f0;border-bottom:none">
<div class="hd" style="width:922px"></div>
<div class="hc" style="left:0px;width:93px;padding-left:23px;border-left:none">会员名称</div>
<div class="hc" style="left:93px;width:75px">服务项目</div>
<div class="hc" style="left:168px;width:75px">排程员工</div>
<div class="hc" style="left:243px;width:75px">排程房间</div>
<div class="hc" style="left:318px;width:75px">排程床位</div>
<div class="hc" style="left:393px;width:87px">开始时间</div>
<div class="hc" style="left:480px;width:75px">结束时间</div>
<div class="hc" style="left:555px;width:75px">状态</div>
<div class="hc" style="left:630px;width:291px"></div>
<svg class="abs" style="left:79px;top:7px" width="10" height="5.500"><path d="M0 5.500L5 0l5 5.500z" fill="#4a4a4a"/></svg>
<div class="row" style="top:21px;width:922px;height:26px;background:#fff">
<div class="c" style="left:0px;width:93px;line-height:28px;padding-left:22px;border-left:none">张三</div>
<div class="c" style="left:93px;width:75px;line-height:28px">美腿</div>
<div class="c" style="left:168px;width:75px;line-height:28px">李四</div>
<div class="c" style="left:243px;width:75px;line-height:28px">1号房</div>
<div class="c" style="left:318px;width:75px;line-height:28px">1号床</div>
<div class="c" style="left:393px;width:87px;line-height:28px"></div>
<div class="c" style="left:480px;width:75px;line-height:28px;padding-left:1.500px">12:00</div>
<div class="c" style="left:555px;width:75px;line-height:28px;padding-left:1.500px">良好</div>
<div class="c" style="left:630px;width:291px;line-height:28px;padding-left:10.500px;letter-spacing:-0.180px">下次祛痘、星期三、1号房、1号床、09：00</div>
</div>
<div class="row" style="top:47px;width:922px;height:26px;background:#fff">
<div class="c" style="left:0px;width:93px;line-height:28px;padding-left:22px;border-left:none">王五</div>
<div class="c" style="left:93px;width:75px;line-height:28px">祛痘</div>
<div class="c" style="left:168px;width:75px;line-height:28px">张三</div>
<div class="c" style="left:243px;width:75px;line-height:28px">2号房</div>
<div class="c" style="left:318px;width:75px;line-height:28px">1号床</div>
<div class="c" style="left:393px;width:87px;line-height:28px"></div>
<div class="c" style="left:480px;width:75px;line-height:28px;padding-left:1.500px">12:00</div>
<div class="c" style="left:555px;width:75px;line-height:28px;padding-left:1.500px">良好</div>
<div class="c" style="left:630px;width:291px;line-height:28px;padding-left:10.500px;letter-spacing:-0.180px">下次美腿、星期三、2号房、1号床、09：00</div>
</div>
<div class="row" style="top:73px;width:922px;height:26px;background:#fff">
<div class="c" style="left:0px;width:93px;line-height:28px;padding-left:22px;border-left:none">赵六</div>
<div class="c" style="left:93px;width:75px;line-height:28px">护肤</div>
<div class="c" style="left:168px;width:75px;line-height:28px">王五</div>
<div class="c" style="left:243px;width:75px;line-height:28px">3号房</div>
<div class="c" style="left:318px;width:75px;line-height:28px">1号床</div>
<div class="c" style="left:393px;width:87px;line-height:28px">08：30</div>
<div class="c" style="left:480px;width:75px;line-height:28px;padding-left:1.500px">12:00</div>
<div class="c" style="left:555px;width:75px;line-height:28px;padding-left:1.500px">良好</div>
<div class="c" style="left:630px;width:291px;line-height:28px;padding-left:10.500px;letter-spacing:-0.180px">下次祛痘、星期三、3号房、1号床、09：00</div>
</div>
<div class="row" style="top:99px;width:922px;height:25px;background:#fff">
<div class="c" style="left:0px;width:93px;line-height:28px;padding-left:22px;border-left:none">黄丽</div>
<div class="c" style="left:93px;width:75px;line-height:28px">补水</div>
<div class="c" style="left:168px;width:75px;line-height:28px">赵六</div>
<div class="c" style="left:243px;width:75px;line-height:28px">4号房</div>
<div class="c" style="left:318px;width:75px;line-height:28px">1号床</div>
<div class="c" style="left:393px;width:87px;line-height:28px">08：30</div>
<div class="c" style="left:480px;width:75px;line-height:28px;padding-left:1.500px">12:00</div>
<div class="c" style="left:555px;width:75px;line-height:28px;padding-left:1.500px">良好</div>
<div class="c" style="left:630px;width:291px;line-height:28px;padding-left:10.500px;letter-spacing:-0.180px">下次祛痘、星期三、4号房、1号床、09：00</div>
</div>
<div class="row" style="top:124px;width:922px;height:26px;background:#fff">
<div class="c" style="left:0px;width:93px;line-height:28px;padding-left:22px;border-left:none">周玲</div>
<div class="c" style="left:93px;width:75px;line-height:28px">养发</div>
<div class="c" style="left:168px;width:75px;line-height:28px">黄莉</div>
<div class="c" style="left:243px;width:75px;line-height:28px">5号房</div>
<div class="c" style="left:318px;width:75px;line-height:28px">1号床</div>
<div class="c" style="left:393px;width:87px;line-height:28px">08：30</div>
<div class="c" style="left:480px;width:75px;line-height:28px;padding-left:1.500px">12:00</div>
<div class="c" style="left:555px;width:75px;line-height:28px;padding-left:1.500px">良好</div>
<div class="c" style="left:630px;width:291px;line-height:28px;padding-left:10.500px;letter-spacing:-0.180px">下次祛痘、星期三、5号房、1号床、09：00</div>
</div>
<div class="row" style="top:150px;width:922px;height:26px;background:#fff">
<div class="c" style="left:0px;width:93px;line-height:28px;padding-left:22px;border-left:none">唐糖</div>
<div class="c" style="left:93px;width:75px;line-height:28px">修眉</div>
<div class="c" style="left:168px;width:75px;line-height:28px">周灵</div>
<div class="c" style="left:243px;width:75px;line-height:28px">6号房</div>
<div class="c" style="left:318px;width:75px;line-height:28px">1号床</div>
<div class="c" style="left:393px;width:87px;line-height:28px">08：30</div>
<div class="c" style="left:480px;width:75px;line-height:28px;padding-left:1.500px">12:00</div>
<div class="c" style="left:555px;width:75px;line-height:28px;padding-left:1.500px">良好</div>
<div class="c" style="left:630px;width:291px;line-height:28px;padding-left:10.500px;letter-spacing:-0.180px">下次祛痘、星期三、6号房、1号床、09：00</div>
</div>
<div class="row" style="top:176px;width:922px;height:26px;background:#fff">
<div class="c" style="left:0px;width:93px;line-height:28px;padding-left:22px;border-left:none">叶倩</div>
<div class="c" style="left:93px;width:75px;line-height:28px">护肤</div>
<div class="c" style="left:168px;width:75px;line-height:28px">糖糖</div>
<div class="c" style="left:243px;width:75px;line-height:28px">7号房</div>
<div class="c" style="left:318px;width:75px;line-height:28px">1号床</div>
<div class="c" style="left:393px;width:87px;line-height:28px">08：30</div>
<div class="c" style="left:480px;width:75px;line-height:28px;padding-left:1.500px">12:00</div>
<div class="c" style="left:555px;width:75px;line-height:28px;padding-left:1.500px">良好</div>
<div class="c" style="left:630px;width:291px;line-height:28px;padding-left:10.500px;letter-spacing:-0.180px">下次祛痘、星期三、7号房、1号床、09：00</div>
</div>
<div class="row" style="top:202px;width:922px;height:26px;background:#fff">
<div class="c" style="left:0px;width:93px;line-height:28px;padding-left:22px;border-left:none">崔萍</div>
<div class="c" style="left:93px;width:75px;line-height:28px">美腿</div>
<div class="c" style="left:168px;width:75px;line-height:28px">叶婷</div>
<div class="c" style="left:243px;width:75px;line-height:28px">8号房</div>
<div class="c" style="left:318px;width:75px;line-height:28px">1号床</div>
<div class="c" style="left:393px;width:87px;line-height:28px">08：30</div>
<div class="c" style="left:480px;width:75px;line-height:28px;padding-left:1.500px">12:00</div>
<div class="c" style="left:555px;width:75px;line-height:28px;padding-left:1.500px">良好</div>
<div class="c" style="left:630px;width:291px;line-height:28px;padding-left:10.500px;letter-spacing:-0.180px">下次祛痘、星期三、8号房、1号床、09：00</div>
</div>
<div class="row" style="top:228px;width:922px;height:26px;background:#fff">
<div class="c" style="left:0px;width:93px;line-height:28px;padding-left:22px;border-left:none">钟琳</div>
<div class="c" style="left:93px;width:75px;line-height:28px">补水</div>
<div class="c" style="left:168px;width:75px;line-height:28px">黄林</div>
<div class="c" style="left:243px;width:75px;line-height:28px">9号房</div>
<div class="c" style="left:318px;width:75px;line-height:28px">1号床</div>
<div class="c" style="left:393px;width:87px;line-height:28px">08：30</div>
<div class="c" style="left:480px;width:75px;line-height:28px;padding-left:1.500px">12:00</div>
<div class="c" style="left:555px;width:75px;line-height:28px;padding-left:1.500px">良好</div>
<div class="c" style="left:630px;width:291px;line-height:28px;padding-left:10.500px;letter-spacing:-0.180px">下次祛痘、星期三、9号房、1号床、09：00</div>
</div>
<div class="row" style="top:254px;width:922px;height:26px;background:#fff">
<div class="c" style="left:0px;width:93px;line-height:28px;padding-left:22px;border-left:none">鲁婷</div>
<div class="c" style="left:93px;width:75px;line-height:28px">美腿</div>
<div class="c" style="left:168px;width:75px;line-height:28px">钟琳</div>
<div class="c" style="left:243px;width:75px;line-height:28px">10号房</div>
<div class="c" style="left:318px;width:75px;line-height:28px">1号床</div>
<div class="c" style="left:393px;width:87px;line-height:28px">08：30</div>
<div class="c" style="left:480px;width:75px;line-height:28px;padding-left:1.500px">12:00</div>
<div class="c" style="left:555px;width:75px;line-height:28px;padding-left:1.500px">良好</div>
<div class="c" style="left:630px;width:291px;line-height:28px;padding-left:10.500px;letter-spacing:-0.180px">下次祛痘、星期三、10号房、1号床、09：00</div>
</div>
<div class="row" style="top:280px;width:922px;height:30px;background:#fff">
<div class="c" style="left:0px;width:93px;line-height:32px;padding-left:22px;border-left:none">罗美</div>
<div class="c" style="left:93px;width:75px;line-height:32px">美腿</div>
<div class="c" style="left:168px;width:75px;line-height:32px">鲁婷</div>
<div class="c" style="left:243px;width:75px;line-height:32px">11号房</div>
<div class="c" style="left:318px;width:75px;line-height:32px">1号床</div>
<div class="c" style="left:393px;width:87px;line-height:32px">08：30</div>
<div class="c" style="left:480px;width:75px;line-height:32px;padding-left:1.500px">12:00</div>
<div class="c" style="left:555px;width:75px;line-height:32px;padding-left:1.500px">良好</div>
<div class="c" style="left:630px;width:291px;line-height:32px;padding-left:10.500px;letter-spacing:-0.180px">下次祛痘、星期三、11号房、1号床、09：00</div>
</div>
<div class="t" style="left:374px;top:197px;letter-spacing:-0.300px;font-family:'Liberation Sans','Noto Sans CJK SC',sans-serif;font-size:14px">08：30</div>
<div class="t" style="left:374px;top:222px;letter-spacing:-0.300px;font-family:'Liberation Sans','Noto Sans CJK SC',sans-serif;font-size:14px">09：30</div>
</div>
<div class="abs" style="left:0;top:1011px;width:1920px;height:28px;background:#f0f0f0"></div>
<div class="t" style="left:7px;top:1019px">门店：傲蓝美丽</div>
<div class="t" style="left:103px;top:1018px;font-size:14px;font-weight:400">|</div>
<div class="t" style="left:112px;top:1019px">用户：超级管理员</div>
<div class="t" style="left:220.500px;top:1018px;font-size:14px;font-weight:400">|</div>
<div class="t" style="left:228px;top:1019px">傲蓝网站：</div>
<div class="t" style="left:295px;top:1019px;color:#1b6fc2;text-decoration:underline;font-size:13.700px">http://www.aolan.net</div>
<div class="abs" style="left:0;top:1037.500px;width:1920px;height:1.500px;background:#bdbdbd"></div>
<div class="abs" style="left:1064px;top:1037.500px;width:856px;height:1.500px;background:#5c5c5c"></div>
<div class="abs" style="left:2px;top:1008.500px;width:1917px;height:2px;background:#c2c2c2"></div>
</div></body></html>
